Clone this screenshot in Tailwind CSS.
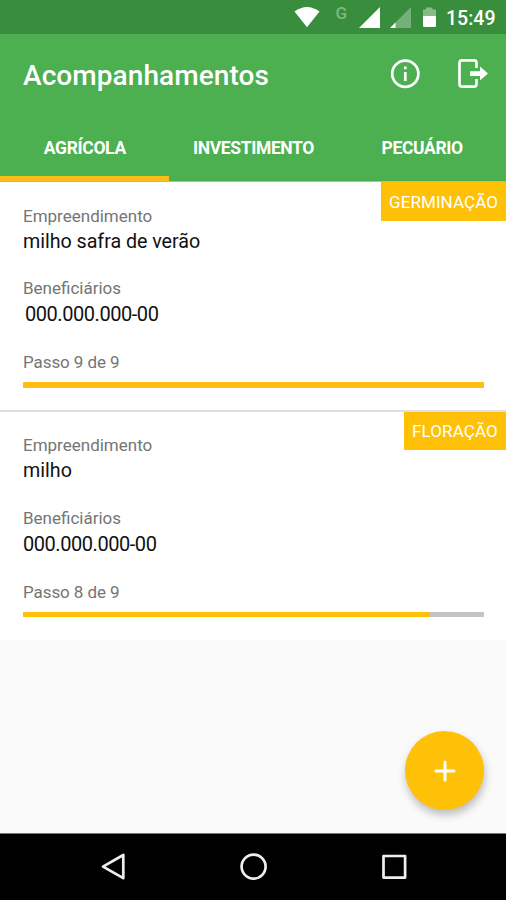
<!DOCTYPE html>
<html lang="pt-BR">
<head>
<meta charset="utf-8">
<meta name="viewport" content="width=device-width, initial-scale=1">
<title>Acompanhamentos</title>
<script src="https://cdn.jsdelivr.net/npm/@tailwindcss/browser@4"></script>
</head>
<body class="bg-black">
<div class="relative flex h-[900px] w-[506px] flex-col overflow-hidden bg-[#fafafa] font-['Roboto',sans-serif]">
  <div class="flex h-[34px] shrink-0 items-center bg-[#388e3c]">
    <svg class="h-[34px] w-[150px] ml-[290px] shrink-0" viewBox="290 0 150 34" fill="#fff">
      <path d="M294.5 11.5Q307 2.500 319.500 11.500L307 27.200Z"/>
      <text x="335.500" y="19" font-size="17" font-weight="500" fill="#81b983">G</text>
      <path d="M380 7V28H359Z"/>
      <path d="M411 7V28H390Z" fill="#74b077"/>
      <path d="M395.500 22.500V28H390Z"/>
      <path d="M423 9.500H426V7.500H432.500V9.500H436V16H423Z" fill="#88bb8a"/>
      <path d="M423 16H436V25.500Q436 27 434.500 27H424.500Q423 27 423 25.500Z"/>
    </svg>
    <span class="ml-[6px] mt-[3px] text-[19.500px] font-medium leading-[24px] whitespace-nowrap text-white">15:49</span>
  </div>
  <header class="flex h-[148px] shrink-0 flex-col border-b border-[#b5b5b5] bg-[#4caf50] text-white">
    <div class="flex h-[80px] shrink-0 items-center pl-[23px] pt-[3px]">
      <h1 class="text-[28px] font-medium leading-[32px] tracking-[0.08px] whitespace-nowrap">Acompanhamentos</h1>
      <svg class="absolute left-[388px] top-[54px] h-[40px] w-[110px]" viewBox="388 54 110 40" fill="none" stroke="#fff">
        <circle cx="405.300" cy="73.700" r="13.100" stroke-width="2.700"/>
        <path d="M405.300 72V81M405.300 66.500V69.300" stroke-width="2.700"/>
        <path d="M476.500 68V63Q476.500 60.300 474 60.300H462Q459.500 60.300 459.500 63V84Q459.500 86.700 462 86.700H474Q476.500 86.700 476.500 84V79" stroke-width="2.700"/>
        <path d="M470 71.200H480V66.500L488 73.600L480 80.500V76H470Z" fill="#fff" stroke="none"/>
      </svg>
    </div>
    <nav class="grid h-[67px] grid-cols-3 text-center text-[17.500px] font-bold leading-[69px] tracking-[-0.350px]">
      <div class="h-[67px] border-b-[5px] border-[#fbbc14] pl-px">AGRÍCOLA</div>
      <div class="h-[67px] pl-px">INVESTIMENTO</div>
      <div class="h-[67px] pl-px">PECUÁRIO</div>
    </nav>
  </header>
  <section class="relative h-[230px] shrink-0 border-b-[2px] border-[#e0e0e0] bg-white px-[23px] pt-[24px]">
    <span class="absolute right-0 top-0 h-[39px] w-[125px] bg-[#ffc107] pl-[8px] text-[17px] leading-[41px] tracking-[0.080px] whitespace-nowrap text-white">GERMINAÇÃO</span>
    <p class="h-[22px] text-[17px] leading-[21px] text-[#757575]">Empreendimento</p>
    <p class="h-[50px] text-[19.700px] leading-[27px] tracking-[-0.040px] text-[#111]">milho safra de verão</p>
    <p class="h-[23px] text-[17px] leading-[21px] text-[#757575]">Beneficiários</p>
    <p class="h-[51px] pl-[2px] text-[20px] leading-[27px] tracking-[-0.450px] text-[#111]">000.000.000-00</p>
    <p class="h-[30px] text-[17px] leading-[21px] tracking-[-0.080px] text-[#757575]">Passo 9 de 9</p>
    <div class="h-[5.500px] w-[461px] overflow-hidden rounded-[1px] bg-[#c4c4c4]"><div class="h-full w-full bg-[#fdbe10]"></div></div>
  </section>
  <section class="relative h-[228px] shrink-0 bg-white px-[23px] pt-[23px]">
    <span class="absolute right-0 top-0 h-[38px] w-[102px] bg-[#ffc107] pl-[8px] text-[17px] leading-[39px] tracking-[0.120px] whitespace-nowrap text-white">FLORAÇÃO</span>
    <p class="h-[22px] text-[17px] leading-[21px] text-[#757575]">Empreendimento</p>
    <p class="h-[51px] text-[19.700px] leading-[27px] text-[#111]">milho</p>
    <p class="h-[23px] text-[17px] leading-[21px] text-[#757575]">Beneficiários</p>
    <p class="h-[51px] text-[20px] leading-[27px] tracking-[-0.450px] text-[#111]">000.000.000-00</p>
    <p class="h-[30px] text-[17px] leading-[21px] tracking-[-0.080px] text-[#757575]">Passo 8 de 9</p>
    <div class="h-[5px] w-[461px] overflow-hidden rounded-[1px] bg-[#c4c4c4]"><div class="h-full w-[407px] bg-[#ffc107]"></div></div>
  </section>
  <main class="flex-1"></main>
  <button class="absolute left-[405.400px] top-[731.400px] flex size-[79px] items-center justify-center rounded-full bg-[#ffc107] shadow-[1px_5px_9px_rgba(0,0,0,0.25)]" aria-label="Adicionar">
    <svg class="size-[22px]" viewBox="0 0 22 22" stroke="#fff" stroke-width="3" stroke-linecap="round"><path d="M11 2V20M2 11H20"/></svg>
  </button>
  <footer class="h-[67px] shrink-0 border-t border-[#777] bg-black">
    <svg class="h-[66px] w-[506px]" viewBox="0 834 506 66" fill="none" stroke="#eee" stroke-width="2.700" stroke-linejoin="round">
      <path d="M123.300 855V878.200L103 866.700Z"/>
      <circle cx="253.600" cy="866.600" r="12"/>
      <rect x="383.500" y="856" width="21.600" height="21.600"/>
    </svg>
  </footer>
</div>
</body>
</html>
